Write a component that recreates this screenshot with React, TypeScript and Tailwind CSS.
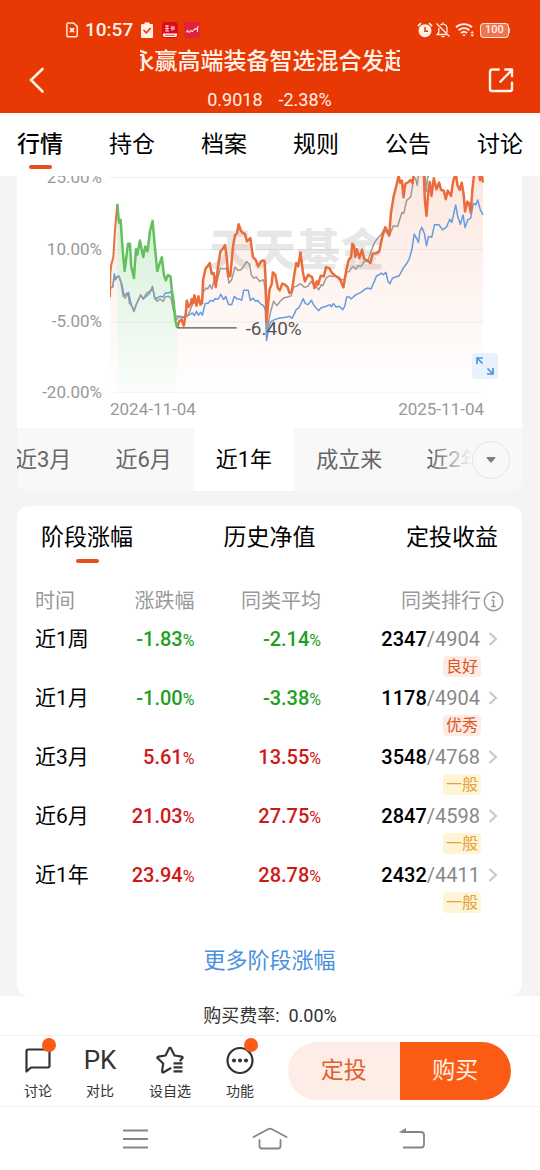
import { useState } from "react";
import { clsx } from "clsx";

interface StageRow {
  period: string;
  change: string;
  average: string;
  rank: string;
  total: string;
  level: string;
}

const SECTIONS = ["行情", "持仓", "档案", "规则", "公告", "讨论"];
const RANGES = ["近3月", "近6月", "近1年", "成立来", "近2年"];
const PANELS = ["阶段涨幅", "历史净值", "定投收益"];
const Y_LABELS = ["25.00%", "10.00%", "-5.00%", "-20.00%"];

const ROWS: StageRow[] = [
  { period: "近1周", change: "-1.83", average: "-2.14", rank: "2347", total: "4904", level: "良好" },
  { period: "近1月", change: "-1.00", average: "-3.38", rank: "1178", total: "4904", level: "优秀" },
  { period: "近3月", change: "5.61", average: "13.55", rank: "3548", total: "4768", level: "一般" },
  { period: "近6月", change: "21.03", average: "27.75", rank: "2847", total: "4598", level: "一般" },
  { period: "近1年", change: "23.94", average: "28.78", rank: "2432", total: "4411", level: "一般" },
];

const FUND_START = "30,383 31,310 34,284 40,262 45,180 52,102";
const FUND_DRAWDOWN =
  "52,102 57,158 62,150 68,240 74,304 84,222 90,222 94,290 102,325 108,238 112,255 120,212 130,262 136,230 143,245 150,185 158,153 164,220 172,304 178,285 186,262 192,315 198,332 204,316 212,320 216,360 222,400 226,450 232,474";
const FUND_REST =
  "232,474 238,455 245,450 252,468 258,430 261,393 266,412 272,405 276,388 280,400 284,377 290,408 296,380 302,405 307,400 310,330 318,295 325,288 330,280 336,312 342,310 348,352 355,290 362,245 370,236 376,226 381,262 386,320 392,318 400,230 406,196 412,190 417,163 424,183 430,190 436,192 442,215 452,205 460,262 468,270 476,290 484,275 490,272 495,275 498,330 501,455 506,400 510,358 516,345 520,308 527,315 535,355 541,362 548,342 556,345 564,352 570,370 577,365 585,310 590,280 596,290 603,248 610,305 616,335 626,315 638,322 645,355 652,335 656,345 664,318 673,320 680,292 690,296 698,310 710,320 720,325 732,353 740,305 748,270 755,262 759,222 764,228 768,262 773,238 780,265 788,240 795,268 805,272 813,280 820,252 832,250 840,245 848,205 858,172 870,195 875,130 883,80 892,45 898,18 903,38 908,32 913,82 918,42 928,36 934,30 940,40 944,10 974,10 977,90 982,138 988,60 992,36 997,78 1004,25 1012,58 1020,38 1026,60 1034,62 1040,88 1046,62 1056,78 1062,35 1070,10 1075,45 1082,60 1088,38 1094,75 1098,125 1105,95 1110,100 1115,128 1120,60 1126,5 1140,5 1143,30 1147,5 1152,38";
const AVERAGE_LINE =
  "30,355 38,352 42,330 48,325 56,318 62,335 70,380 76,385 84,370 88,400 96,410 102,426 108,405 116,390 122,375 130,388 140,370 150,365 158,350 164,385 172,395 180,388 190,395 196,382 206,380 214,385 220,420 230,450 240,440 255,442 262,440 270,425 280,400 290,400 305,395 312,365 318,355 324,358 330,345 336,358 345,325 352,335 362,295 372,298 380,295 388,340 396,330 406,292 415,302 424,300 432,290 441,275 450,285 455,315 462,325 470,322 480,335 492,330 497,360 503,480 512,430 522,395 532,408 542,395 552,385 564,382 575,378 582,352 590,350 603,342 615,353 625,350 635,335 642,345 650,350 658,360 666,345 670,348 680,325 690,318 700,320 710,318 720,330 735,330 742,308 750,305 760,290 770,298 775,288 785,290 795,275 805,275 815,245 825,220 835,205 845,195 855,178 870,200 882,168 895,170 908,128 914,130 922,92 935,80 944,22 950,28 954,46 958,15 970,5 978,15 981,65 986,20 995,12";
const INDEX_LINE =
  "30,355 38,352 43,312 47,330 52,320 58,322 66,345 72,378 80,372 86,368 92,398 102,425 112,398 122,376 130,388 148,372 158,355 166,388 180,380 190,382 196,370 206,370 214,366 220,400 228,440 238,440 246,445 256,442 270,435 278,430 284,438 290,425 296,437 302,428 308,436 316,402 326,400 332,392 340,395 346,387 356,388 363,374 372,390 378,380 386,404 396,405 404,380 412,388 420,388 426,392 432,362 446,362 452,392 460,386 468,395 474,392 482,402 492,408 497,420 501,513 508,470 514,457 525,450 540,445 560,443 570,440 578,446 586,430 590,420 598,415 604,403 611,387 618,402 626,405 636,392 642,405 650,415 658,423 664,415 680,410 692,405 696,412 702,402 710,412 720,410 730,420 736,410 742,382 750,382 755,388 770,375 785,368 795,360 805,355 815,358 825,335 832,318 840,315 846,310 852,315 860,308 866,335 872,342 880,325 890,322 900,318 912,295 920,285 930,268 938,240 945,193 952,205 958,218 962,185 968,172 976,192 982,228 988,200 998,202 1006,165 1020,165 1030,180 1042,172 1052,148 1058,158 1070,105 1076,140 1084,163 1092,135 1098,173 1106,150 1115,145 1123,100 1130,105 1136,90 1144,120 1152,135";

const StatusBar = () => (
  <div className="flex h-6 items-center pl-[66px] pr-[30px]">
    <svg className="h-4 w-3" viewBox="0 0 12 16" fill="none" stroke="currentColor" strokeWidth="1.4">
      <path d="M2.2 1h5.3L11.2 4.400V13.500a1.300 1.300 0 0 1-1.300 1.300H2.200A1.300 1.300 0 0 1 .9 13.500V2.300A1.300 1.300 0 0 1 2.200 1z" />
      <path d="M4 6.200l4 4M8 6.200l-4 4" strokeWidth="1.800" />
    </svg>
    <span className="ml-[7px] text-[19px] font-medium leading-6">10:57</span>
    <svg className="ml-2 h-4 w-3" viewBox="0 0 12 16">
      <path d="M1 2h2.500V.5h5V2H11a1 1 0 0 1 1 1v12a1 1 0 0 1-1 1H1a1 1 0 0 1-1-1V3a1 1 0 0 1 1-1z" fill="currentColor" />
      <path d="M2.500 8l2.800 2.800L9.700 6" fill="none" stroke="#e83803" strokeWidth="1.600" />
    </svg>
    <svg className="ml-[9px] h-4 w-4" viewBox="0 0 16 16">
      <rect width="16" height="16" rx="4" fill="#de0a17" />
      <path d="M3 4h4M3 6.500h4M5 3v6M3 9h4M10 3.500v5.500M8.500 6h4M12 4v4" stroke="#fff" strokeWidth=".8" />
      <path d="M1 11.500h14v1.500a2 2 0 0 1-2 2H3a2 2 0 0 1-2-2z" fill="#fff" />
      <path d="M3 13.300h10" stroke="#de0a17" strokeWidth=".8" />
    </svg>
    <svg className="ml-[6px] h-4 w-4" viewBox="0 0 16 16">
      <rect width="16" height="16" rx="4" fill="#e1213a" />
      <path d="M2 10.500l1.500-2 1.500 2L7 8.500l1.500 1L11 6.500l1 1L14.500 4M13.500 5v5" fill="none" stroke="#ffd5d5" strokeWidth="1.100" />
    </svg>
    <div className="ml-auto flex items-center">
      <svg className="h-4 w-4" viewBox="0 0 16 16">
        <circle cx="8" cy="8.700" r="6.500" fill="currentColor" />
        <path d="M.8 4.200L4 1.200M15.200 4.200L12 1.200" stroke="currentColor" strokeWidth="1.600" />
        <path d="M8 5v4.200h3" fill="none" stroke="#e83803" strokeWidth="1.500" />
      </svg>
      <svg className="ml-[2px] h-4 w-4" viewBox="0 0 16 16" fill="none" stroke="currentColor" strokeWidth="1.300">
        <path d="M5.500 3A4 4 0 0 1 12 6v4.500M3.800 6v4.500L2.200 12.500h9.300M6.500 14.700h3M8 .5v1.500M1.500 1.500l13 13" />
      </svg>
      <svg className="ml-1 h-4 w-5" viewBox="0 0 20 16" fill="none" stroke="currentColor" strokeWidth="1.900">
        <path d="M1 5.200a12 12 0 0 1 16 0M3.600 8.200a8 8 0 0 1 10.800 0M6 11a4.500 4.500 0 0 1 6 0" />
        <path d="M7.300 12.500L9 14.500l1.700-2z" fill="currentColor" stroke="none" />
        <path d="M15.300 11.200l1.900-2.300 1.900 2.300zM15.300 12.500l1.900 2.300 1.900-2.300z" fill="currentColor" stroke="none" />
      </svg>
      <span className="ml-[5px] flex h-[15px] w-[29px] items-center justify-center rounded border border-white/80 bg-white/30 text-[11px] font-medium leading-3">
        100
      </span>
      <span className="h-[5px] w-px bg-white/80" />
    </div>
  </div>
);

const Header = () => (
  <header className="h-[113px] bg-[#e83803] pt-[18px] text-[#fff1e8]">
    <StatusBar />
    <div className="flex items-start justify-between pl-[22px] pr-[23px]">
      <button aria-label="返回" className="mt-6 flex h-7 w-8 items-center">
        <svg className="h-7 w-7" viewBox="0 0 28 28" fill="none" stroke="currentColor" strokeWidth="2.600" strokeLinecap="round">
          <path d="M20.500 3L9 14l11.500 11.500" />
        </svg>
      </button>
      <div className="w-[260px] pt-[6px]">
        <h1 className="flex justify-center overflow-hidden whitespace-nowrap text-[23px] font-medium leading-7">
          <span className="shrink-0">永赢高端装备智选混合发起</span>
        </h1>
        <p className="mt-3 flex justify-center gap-4 text-[18px] leading-6">
          <span>0.9018</span>
          <span>-2.38%</span>
        </p>
      </div>
      <button aria-label="分享" className="mt-6 flex h-7 w-8 items-center justify-center">
        <svg className="h-7 w-7" viewBox="0 0 28 28" fill="none" stroke="currentColor" strokeWidth="2.400" strokeLinecap="square" strokeLinejoin="round">
          <path d="M11.500 3.500H5.500a2.500 2.500 0 0 0-2.500 2.500v17a2 2 0 0 0 2 2h18a2 2 0 0 0 2-2v-6" />
          <path d="M13.500 15.500L24.500 4.500M18.500 3.500H25v6.500" />
        </svg>
      </button>
    </div>
  </header>
);

const TrendChart = () => (
  <svg className="block h-auto min-w-0 flex-1" viewBox="30 18 1125 654" fill="none" strokeLinejoin="round">
    <defs>
      <linearGradient id="fundFill" x1="0" y1="18" x2="0" y2="672" gradientUnits="userSpaceOnUse">
        <stop offset="0" stopColor="#f06a3a" stopOpacity=".16" />
        <stop offset=".6" stopColor="#f06a3a" stopOpacity=".06" />
        <stop offset="1" stopColor="#f06a3a" stopOpacity="0" />
      </linearGradient>
      <linearGradient id="dropFill" x1="0" y1="102" x2="0" y2="672" gradientUnits="userSpaceOnUse">
        <stop offset="0" stopColor="#4fc15a" stopOpacity=".26" />
        <stop offset="1" stopColor="#4fc15a" stopOpacity=".02" />
      </linearGradient>
    </defs>
    <path d="M30 22H1155M30 239H1155M30 457H1155M30 671H1155" stroke="#efefef" strokeWidth="3" />
    <text x="327" y="289" fontSize="132" fontWeight="900" fill="#000" fillOpacity=".09">
      天天基金
    </text>
    <polygon points={`30,672 ${FUND_START} 52,672`} fill="url(#fundFill)" />
    <polygon points={`52,672 ${FUND_DRAWDOWN} 232,672`} fill="url(#dropFill)" />
    <polygon points={`232,672 ${FUND_REST} 1152,672`} fill="url(#fundFill)" />
    <polyline points={INDEX_LINE} stroke="#659be0" strokeWidth="4.500" />
    <polyline points={AVERAGE_LINE} stroke="#a09a97" strokeWidth="4.500" />
    <polyline points={FUND_START} stroke="#e8703f" strokeWidth="6" />
    <polyline points={FUND_REST} stroke="#ea6c3a" strokeWidth="7.500" />
    <polyline points={FUND_DRAWDOWN} stroke="#63c05c" strokeWidth="7.500" />
    <path d="M232 475H411" stroke="#555" strokeWidth="4" />
    <text x="438" y="495" fontSize="57" fill="#555">
      -6.40%
    </text>
  </svg>
);

const ChartCard = () => {
  const [range, setRange] = useState("近1年");

  return (
    <section className="overflow-hidden rounded-b-xl bg-white">
      <div className="relative pb-2 pr-[38px]">
        <div className="flex gap-2">
          <div className="-my-[11px] flex w-[85px] flex-col justify-between text-right text-[17px] leading-6 text-[#999]">
            {Y_LABELS.map((label) => (
              <span key={label}>{label}</span>
            ))}
          </div>
          <TrendChart />
        </div>
        <div className="flex justify-between pl-[93px] pt-[5px] text-[17px] leading-[22px] text-[#999]">
          <span>2024-11-04</span>
          <span>2025-11-04</span>
        </div>
        <button
          aria-label="全屏"
          className="absolute bottom-[49px] right-6 flex h-[26px] w-[26px] items-center justify-center rounded bg-[#e8f1fc]"
        >
          <svg className="h-[26px] w-[26px]" viewBox="0 0 26 26" fill="none" stroke="#4f93de" strokeWidth="1.700">
            <path d="M5 11V5h6M5 5l5.500 5.500M21 15v6h-6M21 21L15.500 15.500" />
          </svg>
        </button>
      </div>
      <div className="relative overflow-hidden bg-[#f8f8f8]">
        <div className="-ml-6 flex">
          {RANGES.map((item) => (
            <button
              key={item}
              onClick={() => setRange(item)}
              className={clsx(
                "h-[63px] shrink-0 px-[22px] text-[22px] leading-7",
                item === range ? "bg-white text-black" : "text-[#666]"
              )}
            >
              {item}
            </button>
          ))}
        </div>
        <div className="absolute inset-y-0 right-0 flex items-center">
          <div className="h-full w-10 bg-linear-to-r from-[#f8f8f8]/0 to-[#f8f8f8]" />
          <div className="flex h-full items-center bg-[#f8f8f8] pr-3">
            <button
              aria-label="更多区间"
              className="flex h-[38px] w-[38px] items-center justify-center rounded-full border border-[#e4e4e4]"
            >
              <svg className="h-[6px] w-[10px]" viewBox="0 0 10 6">
                <path d="M1 0h8a.6.6 0 0 1 .4 1L5.500 5.600a.7.7 0 0 1-1 0L.6 1A.6.6 0 0 1 1 0z" fill="#808080" />
              </svg>
            </button>
          </div>
        </div>
      </div>
    </section>
  );
};

const Percent = ({ value }: { value: string }) => (
  <span className={value.startsWith("-") ? "text-[#1fa022]" : "text-[#d01818]"}>
    <span className="font-medium">{value}</span>
    <span className="text-[16px]">%</span>
  </span>
);

const StageTable = () => (
  <table className="w-full table-fixed text-right">
    <thead>
      <tr className="text-[20px] leading-7 text-[#999]">
        <th className="w-[17%] p-0 text-left font-normal">时间</th>
        <th className="w-[17%] p-0 font-normal">涨跌幅</th>
        <th className="w-[27%] p-0 font-normal">同类平均</th>
        <th className="p-0 font-normal">
          <span className="flex items-center justify-end gap-[2px]">
            同类排行
            <svg className="h-[21px] w-[21px]" viewBox="0 0 21 21" fill="none" stroke="#999">
              <circle cx="10.500" cy="10.500" r="9.200" strokeWidth="1.500" />
              <path d="M10.500 9v6.500M8.500 9.200h2M8.300 15.500h4.400" strokeWidth="1.500" />
              <circle cx="10.500" cy="6" r="1.300" fill="#999" stroke="none" />
            </svg>
          </span>
        </th>
      </tr>
    </thead>
    <tbody>
      <tr className="h-2" />
      {ROWS.map((row) => (
        <tr key={row.period} className="text-[20px] leading-8">
          <td className="p-0 text-left align-top text-[21px] text-black">{row.period}</td>
          <td className="p-0 align-top">
            <Percent value={row.change} />
          </td>
          <td className="p-0 align-top">
            <Percent value={row.average} />
          </td>
          <td className="p-0 align-top">
            <div className="flex items-center justify-end">
              <span className="font-medium text-black">{row.rank}</span>
              <span className="text-[#888]">/{row.total}</span>
              <svg className="ml-[7px] mr-[5px] h-4 w-3" viewBox="0 0 12 16" fill="none" stroke="#c8c8c8" strokeWidth="2">
                <path d="M2.500 2l6.500 6-6.500 6" />
              </svg>
            </div>
            <div className="flex justify-end pb-[5px] pr-[23px] pt-px">
              <span
                className={clsx(
                  "rounded px-[3px] text-[16px] leading-[21px]",
                  row.level === "一般" ? "bg-[#fff4d6] text-[#e3a336]" : "bg-[#fdebe4] text-[#d9561f]"
                )}
              >
                {row.level}
              </span>
            </div>
          </td>
        </tr>
      ))}
    </tbody>
  </table>
);

const StageCard = () => {
  const [panel, setPanel] = useState("阶段涨幅");

  return (
    <section className="mt-[15px] rounded-xl bg-white pb-[19px] pt-4">
      <div className="flex justify-between px-6">
        {PANELS.map((item) => (
          <button
            key={item}
            onClick={() => setPanel(item)}
            className="flex h-[42px] flex-col items-center text-[23px] leading-8 text-black"
          >
            {item}
            {item === panel && <span className="mt-[5px] h-1 w-[23px] rounded-full bg-[#e8501e]" />}
          </button>
        ))}
      </div>
      <div className="mt-[23px] px-[18px]">
        <StageTable />
      </div>
      <div className="mt-[27px] text-center">
        <a href="#stages" className="text-[22px] leading-8 text-[#4a90dc]">
          更多阶段涨幅
        </a>
      </div>
    </section>
  );
};

const Dot = () => <span className="absolute -right-[3px] -top-[7px] h-[14px] w-[14px] rounded-full bg-[#fb5b14]" />;

const ActionBar = () => (
  <div className="flex h-[72px] items-center border-y border-[#f0f0f0] bg-white pl-[15px] pr-[29px] text-[14px] leading-5 text-[#333]">
    <button className="flex w-[46px] flex-col items-center gap-[6px] pt-1">
      <span className="relative">
        <svg className="h-[30px] w-[30px]" viewBox="0 0 30 30" fill="none" stroke="currentColor" strokeWidth="2.200" strokeLinejoin="round">
          <path d="M5 4.500h20a1.500 1.500 0 0 1 1.500 1.500v15a1.500 1.500 0 0 1-1.500 1.500H8L3.500 26.500V6A1.500 1.500 0 0 1 5 4.500z" />
        </svg>
        <Dot />
      </span>
      讨论
    </button>
    <button className="ml-4 flex w-[46px] flex-col items-center gap-[6px] pt-1">
      <span className="text-[26px] leading-[30px]">PK</span>
      对比
    </button>
    <button className="ml-6 flex w-[46px] flex-col items-center gap-[6px] pt-1">
      <svg className="h-[30px] w-[30px]" viewBox="0 0 30 30" fill="none" stroke="currentColor" strokeWidth="2.200" strokeLinecap="round" strokeLinejoin="round">
        <path d="M15.500 23.300L8.600 27.300a1 1 0 0 1-1.500-1.100l1.100-7.700-5.500-5.200a.9.9 0 0 1 .5-1.600l7.300-1.200 3.500-7a1.100 1.100 0 0 1 2 0l3.500 7 7.300 1.200a.9.900 0 0 1 .5 1.600L25.300 15.500" />
        <path d="M18.500 18.300h9M18.500 22.300h9M18.500 26.300h9" strokeLinecap="butt" />
      </svg>
      设自选
    </button>
    <button className="ml-6 flex w-[46px] flex-col items-center gap-[6px] pt-1">
      <span className="relative">
        <svg className="h-[30px] w-[30px]" viewBox="0 0 30 30" fill="none" stroke="currentColor" strokeWidth="2.200">
          <circle cx="15" cy="15.500" r="12.500" />
          <path d="M9 15.500h.01M15 15.500h.01M21 15.500h.01" strokeWidth="4" strokeLinecap="round" />
        </svg>
        <Dot />
      </span>
      功能
    </button>
    <div className="ml-[25px] flex h-[58px] flex-1 overflow-hidden rounded-full text-[23px]">
      <button className="flex-1 bg-[#fdede6] text-[#e2602c]">定投</button>
      <button className="flex-1 bg-[#fb5b14] text-[#fff3e8]">购买</button>
    </div>
  </div>
);

const SystemNav = () => (
  <nav className="flex h-16 items-center justify-center gap-[102px] bg-white text-[#858585]">
    <button aria-label="最近任务">
      <svg className="h-6 w-9" viewBox="0 0 36 24" stroke="currentColor" strokeWidth="1.800">
        <path d="M9 3.500h25M9 12h25M9 20.500h25" />
      </svg>
    </button>
    <button aria-label="主屏幕">
      <svg className="h-6 w-9" viewBox="0 0 36 24" fill="none" stroke="currentColor" strokeWidth="1.800" strokeLinecap="round">
        <path d="M1.500 10L16 2.200q2-1.100 4 0L34.500 10" />
        <path d="M7.500 13v6q0 2.500 2.500 2.500h16q2.500 0 2.500-2.500v-6" />
      </svg>
    </button>
    <button aria-label="返回上一页">
      <svg className="h-6 w-9" viewBox="0 0 36 24" fill="none" stroke="currentColor" strokeWidth="1.800">
        <path d="M11 5h20q3 0 3 3v9.500q0 3-3 3H13" />
        <path d="M8.500 5.500L16 1v4.500z" fill="currentColor" stroke="none" />
      </svg>
    </button>
  </nav>
);

export default function App() {
  const [section, setSection] = useState("行情");

  return (
    <div className="bg-[#f4f4f4] font-['Roboto','Noto_Sans_CJK_SC',sans-serif]">
      <Header />
      <nav className="flex h-[63px] justify-between bg-white px-[17px] pt-4">
        {SECTIONS.map((item) => (
          <button
            key={item}
            onClick={() => setSection(item)}
            className={clsx(
              "flex flex-col items-center text-[23px] leading-8 text-black",
              item === section && "font-medium"
            )}
          >
            {item}
            {item === section && <span className="mt-1 h-1 w-[23px] rounded-full bg-[#e8501e]" />}
          </button>
        ))}
      </nav>
      <main className="pl-[17px] pr-[18px]">
        <ChartCard />
        <StageCard />
      </main>
      <footer>
        <p className="bg-white pb-[7px] pt-2 text-center text-[18px] leading-6 text-[#333]">购买费率:&nbsp; 0.00%</p>
        <ActionBar />
        <SystemNav />
      </footer>
    </div>
  );
}
